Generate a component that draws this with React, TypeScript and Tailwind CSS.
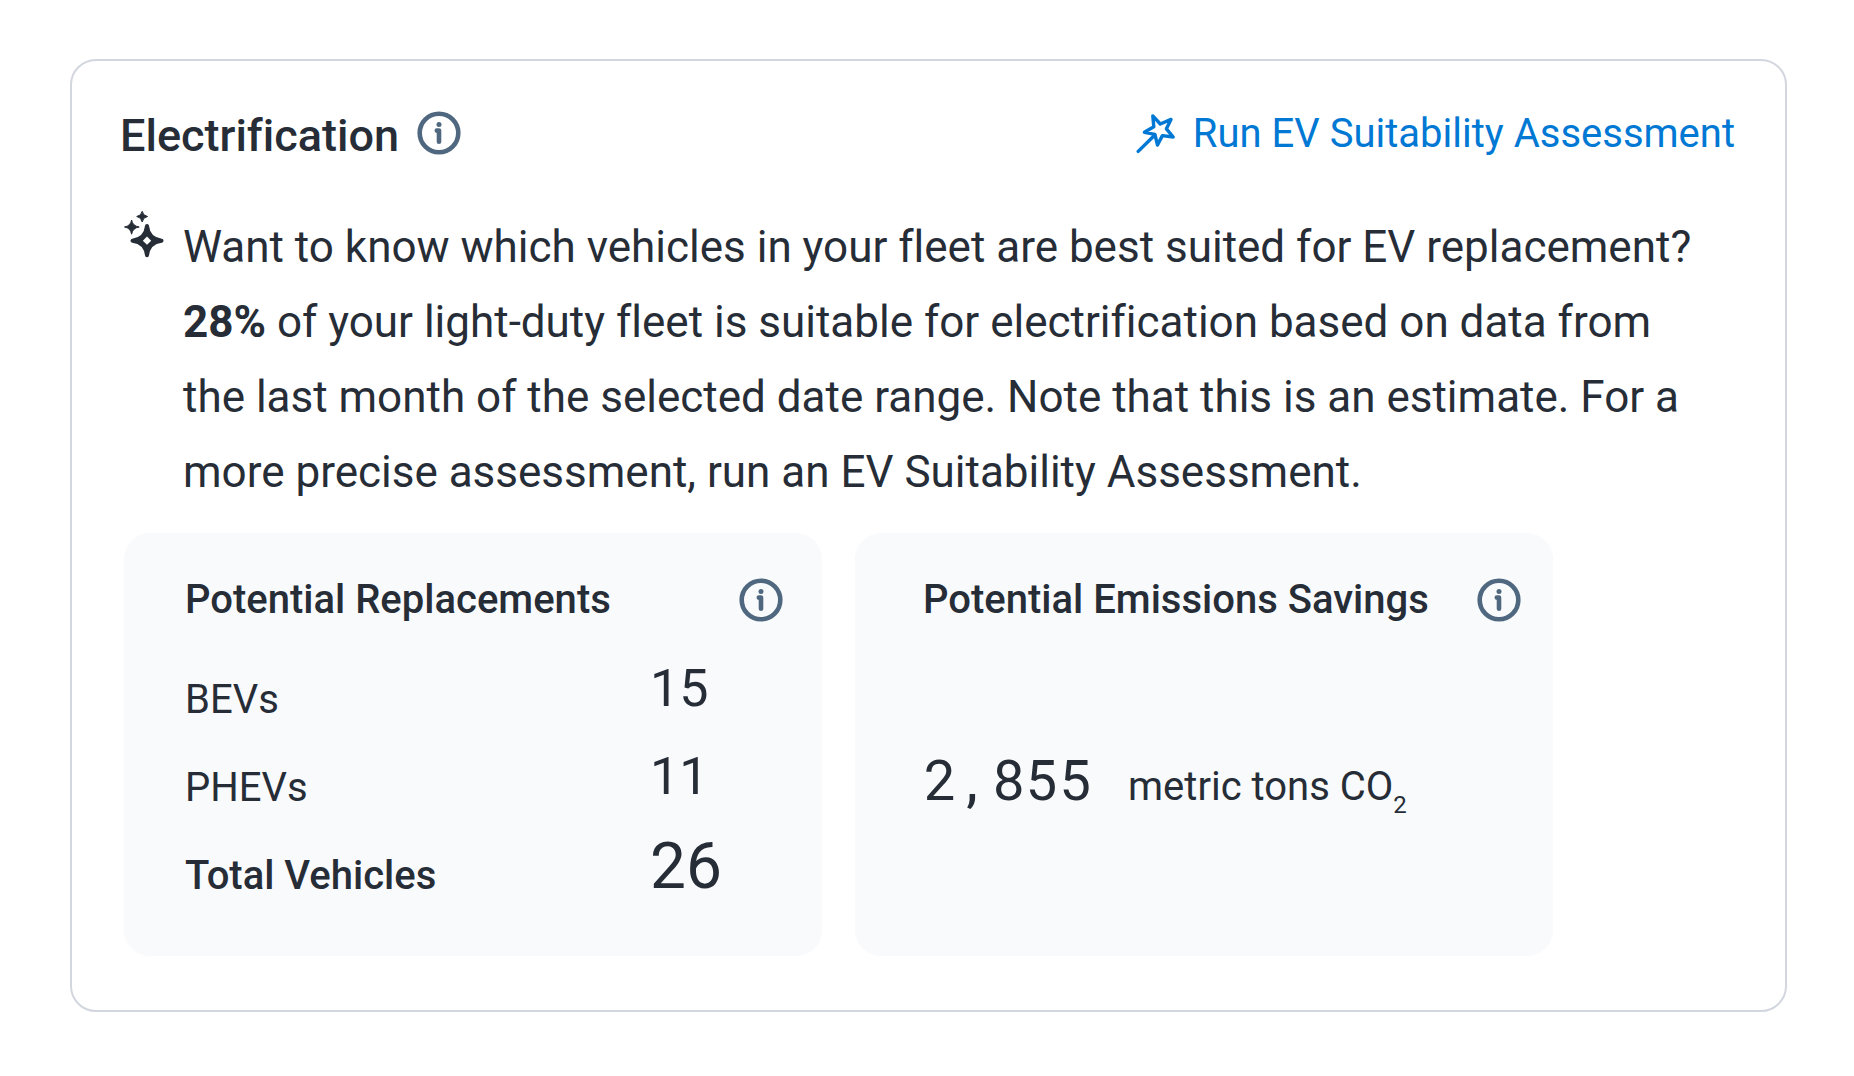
import { ReactNode } from 'react';

const vehicles = [
  { label: 'BEVs', count: 15 },
  { label: 'PHEVs', count: 11 },
];

function InfoButton({ label }: { label: string }) {
  return (
    <button type="button" aria-label={label} className="shrink-0 text-[#4f687f]">
      <svg viewBox="0 0 44 44" className="block w-11 h-11" fill="none" stroke="currentColor">
        <circle cx="22" cy="22" r="19.3" strokeWidth="4.6" />
        <circle cx="22" cy="13.4" r="2.5" fill="currentColor" stroke="none" />
        <path d="M19.8 19.6H22V30.8" strokeWidth="4.6" strokeLinecap="round" strokeLinejoin="round" />
      </svg>
    </button>
  );
}

function WandIcon() {
  return (
    <svg
      viewBox="0 0 40 40"
      className="w-10 h-10 shrink-0"
      fill="none"
      stroke="currentColor"
      strokeWidth="3.4"
      strokeLinecap="round"
      strokeLinejoin="round"
    >
      <path d="M16.8 1.9L24.3 10L35 5.4L30.4 14.8L37.2 23L26.4 21.6L21.5 31L18.9 20.4L8.4 18.3L17.8 12.8Z" />
      <path d="M18.6 21.2L2.2 37.4" />
    </svg>
  );
}

function SparklesIcon() {
  return (
    <svg viewBox="0 0 40 48" className="w-10 h-12 shrink-0" fill="currentColor">
      <g stroke="currentColor" strokeLinejoin="round">
        <path d="M18.2 1.3Q18.9 5.7 23.6 6.5Q18.9 7.3 18.2 12Q17.4 7.3 12.7 6.5Q17.4 5.7 18.2 1.3Z" />
        <path d="M7.6 10Q8.6 16 15.2 17Q8.6 18 7.6 24.2Q6.6 18 0.5 17Q6.6 16 7.6 10Z" />
        <path d="M23 16Q24.3 29 37.5 30.7Q24.3 32.4 23 45.3Q21.7 32.4 8.5 30.7Q21.7 29 23 16Z" strokeWidth="4" />
      </g>
      <path d="M23 26.6L27.2 30.7L23 34.8L18.8 30.7Z" fill="white" />
    </svg>
  );
}

function Panel({ title, className, children }: { title: string; className: string; children: ReactNode }) {
  return (
    <section className={`flex flex-col pt-[45px] pb-[47px] rounded-[26px] bg-[#f9fafc] ${className}`}>
      <div className="flex items-center justify-between">
        <h3 className="text-[40px] leading-11 font-medium whitespace-nowrap">{title}</h3>
        <InfoButton label={`About ${title}`} />
      </div>
      {children}
    </section>
  );
}

export default function App() {
  return (
    <div className="bg-white pt-[59px] pb-[63px] pl-[70px] pr-[67px] font-[Roboto,sans-serif] [font-variant-ligatures:none] text-[#262d37]">
      <article className="border-2 border-[#d2d6de] rounded-[26px] pt-[50px] pb-[54px] pl-12 pr-[50px]">
        {/* Header */}
        <header className="flex items-start justify-between">
          <div className="flex items-start gap-[18px]">
            <h2 className="text-[45px] leading-[50px] font-medium">Electrification</h2>
            <InfoButton label="About Electrification" />
          </div>
          <a href="#assessment" className="flex items-center gap-[17px] text-[40px] leading-[46px] text-[#0078d4]">
            <WandIcon />
            Run EV Suitability Assessment
          </a>
        </header>

        {/* Insight */}
        <div className="flex items-start gap-[19px] pl-1 pr-8 mt-[49px]">
          <SparklesIcon />
          <p className="text-[44px] leading-[75px]">
            Want to know which vehicles in your fleet are best suited for EV replacement?{' '}
            <strong className="font-bold">28%</strong> of your light-duty fleet is suitable for electrification based
            on data from the last month of the selected date range. Note that this is an estimate. For a more precise
            assessment, run an EV Suitability Assessment.
          </p>
        </div>

        {/* Stats */}
        <div className="grid grid-cols-2 gap-[33px] max-w-[1433px] pl-1 mt-[23px]">
          <Panel title="Potential Replacements" className="pl-[61px] pr-[39px]">
            <table className="w-full mt-[23px] text-left">
              <tbody>
                {vehicles.map((row) => (
                  <tr key={row.label} className="h-[88px]">
                    <th scope="row" className="pt-[22px] text-[40px] leading-11 font-normal">
                      {row.label}
                    </th>
                    <td className="w-[133px] text-[52px] leading-[64px]">{row.count}</td>
                  </tr>
                ))}
                <tr className="h-[88px]">
                  <th scope="row" className="pt-[22px] text-[40px] leading-11 font-medium">
                    Total Vehicles
                  </th>
                  <td className="w-[133px] pt-1 text-[64px] leading-[64px]">26</td>
                </tr>
              </tbody>
            </table>
          </Panel>

          <Panel title="Potential Emissions Savings" className="pl-[68px] pr-8">
            <p className="flex flex-1 items-center pt-[34px] pl-px text-[40px] leading-[64px]">
              <span className="flex items-baseline gap-9">
                <span className="font-['Roboto_Mono','DejaVu_Sans_Mono',monospace] text-[56px]">2,855</span>
                <span>
                  metric tons CO<sub className="static align-[-13px] text-[24px]">2</sub>
                </span>
              </span>
            </p>
          </Panel>
        </div>
      </article>
    </div>
  );
}
